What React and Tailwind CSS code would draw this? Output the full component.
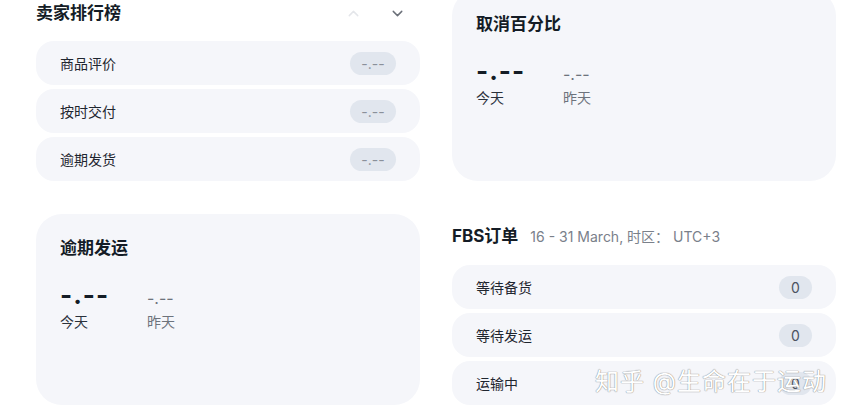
import React from 'react'

const font = { fontFamily: 'Inter, "Noto Sans CJK SC", sans-serif' }

const Row = ({ label, value, wide }) => (
  <div className="flex items-center justify-between h-[44px] rounded-[18px] bg-[#f5f6fa] pl-6 pr-6">
    <span className="text-[14px] text-[#1f2630]">{label}</span>
    <span
      className={`flex items-center justify-center h-[23px] rounded-full bg-[#e1e6ee] text-[14px] ${
        wide ? 'w-[46px] text-[#8a909a]' : 'w-[33px] text-[#4b5360]'
      }`}
    >
      {value}
    </span>
  </div>
)

const StatCard = ({ title }) => (
  <div className="h-[191px] rounded-[26px] bg-[#f5f6fa] px-6 pt-[22px]">
    <div className="text-[17px] font-bold text-[#141c26]">{title}</div>
    <div className="flex mt-[18px]">
      <div className="flex flex-col w-[87px]">
        <span className="whitespace-nowrap text-[26px] leading-[30px] font-bold text-[#141c26] tracking-[1px]">-.--</span>
        <span className="text-[14px] text-[#2a313b] mt-[1px]">今天</span>
      </div>
      <div className="flex flex-col">
        <span className="whitespace-nowrap text-[16px] leading-[30px] text-[#6d737c] pt-[3px]">-.--</span>
        <span className="text-[14px] text-[#6d737c] mt-[-2px]">昨天</span>
      </div>
    </div>
  </div>
)

export default function App() {
  return (
    <div className="relative w-[851px] h-[417px] overflow-hidden bg-white" style={font}>
      <div className="grid grid-cols-[384px_384px] gap-x-[32px] gap-y-[33px] pl-[36px] mt-[-10px]">
        <div className="flex flex-col">
          <div className="flex items-center justify-between h-[44px] pt-[3px]">
            <span className="text-[17px] font-bold text-[#141c26]">卖家排行榜</span>
            <div className="flex items-center gap-[27px] pr-[14px]">
              <svg width="17" height="17" viewBox="0 0 24 24" fill="none" stroke="#e4e6ea" strokeWidth="2" strokeLinecap="round" strokeLinejoin="round">
                <path d="M6 15l6-6 6 6" />
              </svg>
              <svg width="17" height="17" viewBox="0 0 24 24" fill="none" stroke="#6b7079" strokeWidth="2" strokeLinecap="round" strokeLinejoin="round">
                <path d="M6 9l6 6 6-6" />
              </svg>
            </div>
          </div>
          <div className="flex flex-col gap-[4px] mt-[7px]">
            <Row label="商品评价" value="-.--" wide />
            <Row label="按时交付" value="-.--" wide />
            <Row label="逾期发货" value="-.--" wide />
          </div>
        </div>

        <StatCard title="取消百分比" />

        <StatCard title="逾期发运" />

        <div className="flex flex-col pt-[10px]">
          <div className="flex items-baseline gap-3 h-[30px]">
            <span className="text-[17px] font-bold text-[#141c26]">FBS订单</span>
            <span className="text-[14px] text-[#7a808a]">16 - 31 March, 时区： UTC+3</span>
          </div>
          <div className="flex flex-col gap-[4px] mt-[11px]">
            <Row label="等待备货" value="0" />
            <Row label="等待发运" value="0" />
            <Row label="运输中" value="0" />
          </div>
        </div>
      </div>

      <div
        className="absolute left-[595px] top-[364px] text-[24px] text-white tracking-[1px] pointer-events-none"
        style={{ textShadow: '0 0 1px #8a8a8a, 0 0 1px #8a8a8a' }}
      >
        知乎 @生命在于运动
      </div>
    </div>
  )
}
